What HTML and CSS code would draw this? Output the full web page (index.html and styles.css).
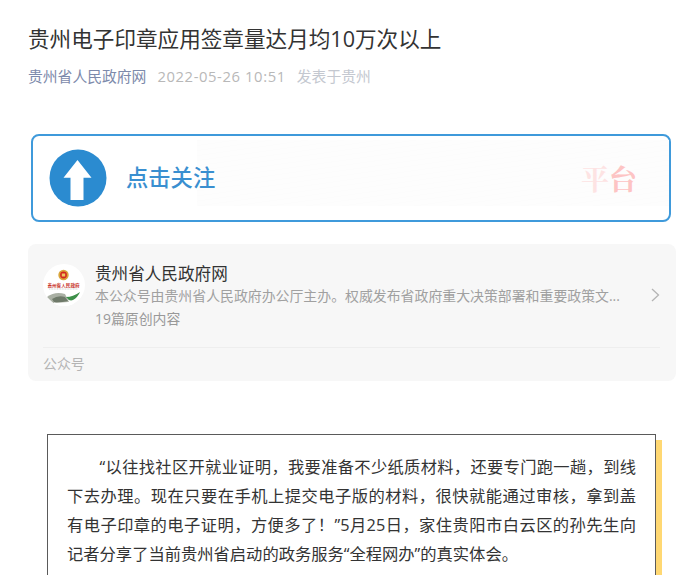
FILE: index.html
```html
<!DOCTYPE html>
<html lang="zh-CN">
<head>
<meta charset="utf-8">
<title>贵州电子印章应用签章量达月均10万次以上</title>
<link rel="stylesheet" href="styles.css">
</head>
<body>
<main class="article">
  <h1 class="title">贵州电子印章应用签章量达月均10万次以上</h1>
  <div class="meta">
    <span class="author">贵州省人民政府网</span>
    <span class="date">2022-05-26 10:51</span>
    <span class="place">发表于贵州</span>
  </div>

  <div class="banner">
    <svg class="banner-icon" viewBox="0 0 58 58" aria-hidden="true">
      <circle cx="29" cy="29" r="28.5" fill="#2b8bd0"/>
      <path d="M28.5 11 L42.5 28.7 H34.5 V51 H21.5 V28.7 H14.5 Z" fill="#fff"/>
    </svg>
    <span class="banner-label">点击关注</span>
    <div class="banner-faint">
      <span class="banner-mark"><span class="mark-light">平</span><span class="mark-strong">台</span></span>
    </div>
  </div>

  <section class="profile">
    <div class="profile-main">
      <svg class="avatar" viewBox="0 0 42 42" aria-hidden="true">
        <defs><clipPath id="c"><circle cx="21" cy="21" r="21"/></clipPath></defs>
        <g clip-path="url(#c)">
          <rect width="42" height="42" fill="#fff"/>
          <circle cx="20.5" cy="11" r="5.2" fill="#d9a53a"/>
          <circle cx="20.5" cy="11" r="3.4" fill="#d4261f"/>
          <rect x="18.8" y="9.5" width="3.4" height="3" fill="#ecc860"/>
          <text x="20.5" y="22.5" class="avatar-text" text-anchor="middle">贵州省人民政府</text>
          <path d="M6 25 H35" stroke="#bdbdbd" stroke-width=".8" stroke-dasharray="1 .6" opacity=".8"/>
          <path d="M4 33 Q12 27 22 30 L26 38 L10 39 Z" fill="#aab0a4"/>
          <path d="M9 35 Q15 31 22 33 L25 37 Q16 39 11 38 Z" fill="#6f7a6a"/>
          <path d="M23 33 Q30 33 37 28 Q35 33 30 36 Q26 37.500 23 33 Z" fill="#3d8f49"/>
          <path d="M11 38.500 Q20 41 31 36.500 L31 42 H11 Z" fill="#fff"/>
        </g>
      </svg>
      <div class="profile-text">
        <div class="profile-name">贵州省人民政府网</div>
        <div class="profile-desc">本公众号由贵州省人民政府办公厅主办。权威发布省政府重大决策部署和重要政策文...</div>
        <div class="profile-count">19篇原创内容</div>
      </div>
      <svg class="chevron" viewBox="0 0 9 14" aria-hidden="true">
        <path d="M1 1 L7.500 7 L1 13" fill="none" stroke="#b4b4b4" stroke-width="1.3"/>
      </svg>
    </div>
    <div class="profile-foot">公众号</div>
  </section>

  <blockquote class="quote">
    <p>“以往找社区开就业证明，我要准备不少纸质材料，还要专门跑一趟，到线下去办理。现在只要在手机上提交电子版的材料，很快就能通过审核，拿到盖有电子印章的电子证明，方便多了！”5月25日，家住贵阳市白云区的孙先生向记者分享了当前贵州省启动的政务服务“全程网办”的真实体会。</p>
  </blockquote>
</main>
</body>
</html>
```

FILE: styles.css
```css
* { box-sizing: border-box; }
html, body { margin: 0; height: 575px; overflow: hidden; background: #fff; }
body { font-family: "Open Sans", "Noto Sans CJK SC", sans-serif; }

.article { padding: 22px 24px 0 28px; }

.title {
  margin: 0;
  font-size: 21.6px;
  line-height: 34px;
  font-weight: 400;
  color: #333;
}

.meta {
  display: flex;
  gap: 11px;
  margin-top: 9px;
  font-size: 14.8px;
  line-height: 22px;
}
.author { color: #7d8aab; }
.date { color: #b8b8b8; letter-spacing: .6px; }
.place { color: #c4c8d0; }

.banner {
  display: flex;
  align-items: center;
  width: 640px;
  height: 88px;
  margin: 47px 0 0 3px;
  padding-left: 16px;
  border: 2px solid #3f9adb;
  border-radius: 8px;
  background: #fff;
}
.banner-icon { width: 58px; height: 58px; flex: none; }
.banner-label {
  position: relative;
  z-index: 1;
  margin: 0 0 3px 19px;
  width: 71px;
  flex: none;
  white-space: nowrap;
  font-size: 22.3px;
  font-weight: 500;
  color: #3a8fd0;
}
.banner-faint {
  flex: 1;
  height: 66px;
  margin-bottom: 11px;
  display: flex;
  align-items: center;
  justify-content: flex-end;
  padding: 10px 32px 0 0;
  background:
    repeating-linear-gradient(172deg, #fcfcfc 0 1px, transparent 1px 5px),
    #fdfdfd;
}
.banner-mark {
  font-family: "Noto Serif CJK SC", "Noto Sans CJK SC", serif;
  font-size: 28px;
  font-weight: 700;
  line-height: 1;
}
.mark-light { color: #fde3e3; }
.mark-strong { color: #fdc4c4; }

.profile {
  width: 648px;
  height: 137px;
  margin-top: 22px;
  padding: 0 16px 0 15px;
  background: #f7f7f7;
  border-radius: 8px;
}
.profile-main {
  display: flex;
  align-items: flex-start;
  height: 104px;
  padding-top: 19px;
  border-bottom: 1px solid #eeeeee;
}
.avatar { width: 42px; height: 42px; flex: none; margin-top: 1px; }
.avatar-text { font-size: 4.6px; font-weight: 700; fill: #c8332b; }
.profile-text { flex: 1; min-width: 0; margin-left: 10px; }
.profile-name { font-size: 16.6px; line-height: 22px; color: #333; }
.profile-desc {
  font-size: 13.9px;
  line-height: 22px;
  color: #a0a0a0;
  white-space: nowrap;
}
.profile-count { margin-top: 1px; font-size: 13.9px; line-height: 22px; color: #999; }
.chevron { width: 9px; height: 14px; flex: none; margin: 25px 0 0 14px; }
.profile-foot {
  padding-top: 5px;
  font-size: 13.9px;
  line-height: 22px;
  color: #b4b4b4;
}

.quote {
  width: 609px;
  margin: 53px 0 0 19px;
  padding: 18px 19px 40px;
  border: 1px solid #5a5a5a;
  box-shadow: 6px 6px 0 #ffd873;
  background: #fff;
}
.quote p {
  margin: 0;
  font-size: 16.3px;
  line-height: 29px;
  text-indent: 2em;
  text-align: justify;
  color: #333;
}
```
